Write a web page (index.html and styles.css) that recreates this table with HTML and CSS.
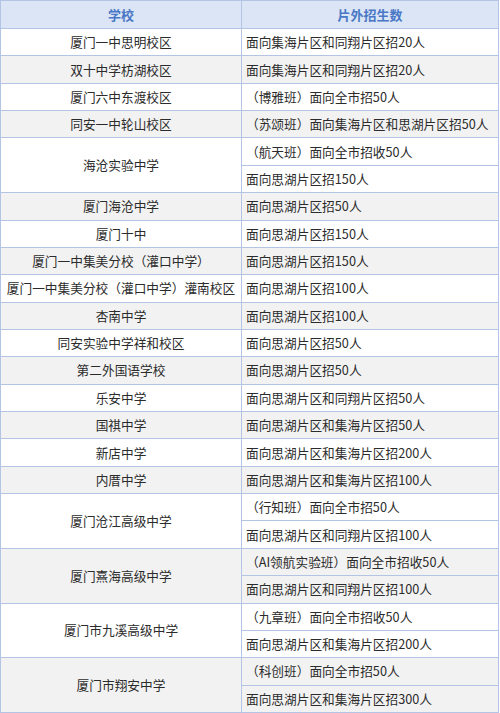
FILE: index.html
```html
<!DOCTYPE html>
<html lang="zh">
<head>
<meta charset="utf-8">
<link rel="stylesheet" href="styles.css">
</head>
<body>
<table class="tbl">
  <colgroup><col class="c1"><col class="c2"></colgroup>
  <thead>
    <tr class="hd"><th>学校</th><th>片外招生数</th></tr>
  </thead>
  <tbody>
    <tr class="w"><td class="sc">厦门一中思明校区</td><td>面向集海片区和同翔片区招20人</td></tr>
    <tr class="g"><td class="sc">双十中学枋湖校区</td><td>面向集海片区和同翔片区招20人</td></tr>
    <tr class="w"><td class="sc">厦门六中东渡校区</td><td>（博雅班）面向全市招50人</td></tr>
    <tr class="g"><td class="sc">同安一中轮山校区</td><td>（苏颂班）面向集海片区和思湖片区招50人</td></tr>
    <tr class="w"><td class="sc" rowspan="2">海沧实验中学</td><td>（航天班）面向全市招收50人</td></tr>
    <tr class="w"><td>面向思湖片区招150人</td></tr>
    <tr class="g"><td class="sc">厦门海沧中学</td><td>面向思湖片区招50人</td></tr>
    <tr class="w"><td class="sc">厦门十中</td><td>面向思湖片区招150人</td></tr>
    <tr class="g"><td class="sc">厦门一中集美分校（灌口中学）</td><td>面向思湖片区招150人</td></tr>
    <tr class="w"><td class="sc">厦门一中集美分校（灌口中学）灌南校区</td><td>面向思湖片区招100人</td></tr>
    <tr class="g"><td class="sc">杏南中学</td><td>面向思湖片区招100人</td></tr>
    <tr class="w"><td class="sc">同安实验中学祥和校区</td><td>面向思湖片区招50人</td></tr>
    <tr class="g"><td class="sc">第二外国语学校</td><td>面向思湖片区招50人</td></tr>
    <tr class="w"><td class="sc">乐安中学</td><td>面向思湖片区和同翔片区招50人</td></tr>
    <tr class="g"><td class="sc">国祺中学</td><td>面向思湖片区和集海片区招50人</td></tr>
    <tr class="w"><td class="sc">新店中学</td><td>面向思湖片区和集海片区招200人</td></tr>
    <tr class="g"><td class="sc">内厝中学</td><td>面向思湖片区和集海片区招100人</td></tr>
    <tr class="w"><td class="sc" rowspan="2">厦门沧江高级中学</td><td>（行知班）面向全市招50人</td></tr>
    <tr class="w"><td>面向思湖片区和同翔片区招100人</td></tr>
    <tr class="g"><td class="sc" rowspan="2">厦门熹海高级中学</td><td>（AI领航实验班）面向全市招收50人</td></tr>
    <tr class="g"><td>面向思湖片区和同翔片区招100人</td></tr>
    <tr class="w"><td class="sc" rowspan="2">厦门市九溪高级中学</td><td>（九章班）面向全市招收50人</td></tr>
    <tr class="w"><td>面向思湖片区和集海片区招200人</td></tr>
    <tr class="g"><td class="sc" rowspan="2">厦门市翔安中学</td><td>（科创班）面向全市招50人</td></tr>
    <tr class="g"><td>面向思湖片区和集海片区招300人</td></tr>
  </tbody>
</table>
</body>
</html>
```
FILE: styles.css
```css
html, body {
  margin: 0;
  padding: 0;
  background: #ffffff;
}
.tbl {
  border-collapse: collapse;
  width: 498px;
  table-layout: fixed;
  font-family: "Noto Sans CJK SC", "Noto Sans", sans-serif;
  font-size: 12.7px;
  color: #2b2b2b;
}
.c1 { width: 241px; }
.c2 { width: 257px; }
.tbl th, .tbl td {
  border: 1px solid #b3c4e4;
  padding: 0 4px;
  height: 26.36px;
  line-height: 16px;
  white-space: nowrap;
  vertical-align: middle;
}
.hd th {
  background: #dbe5f5;
  color: #4a78c6;
  font-weight: bold;
  font-size: 13px;
  text-align: center;
  height: 27px;
}
.tbl td.sc {
  text-align: center;
  padding: 0 2px;
}
.tbl td { text-align: left; }
.w td { background: #ffffff; }
.g td { background: #f2f2f2; }
```
